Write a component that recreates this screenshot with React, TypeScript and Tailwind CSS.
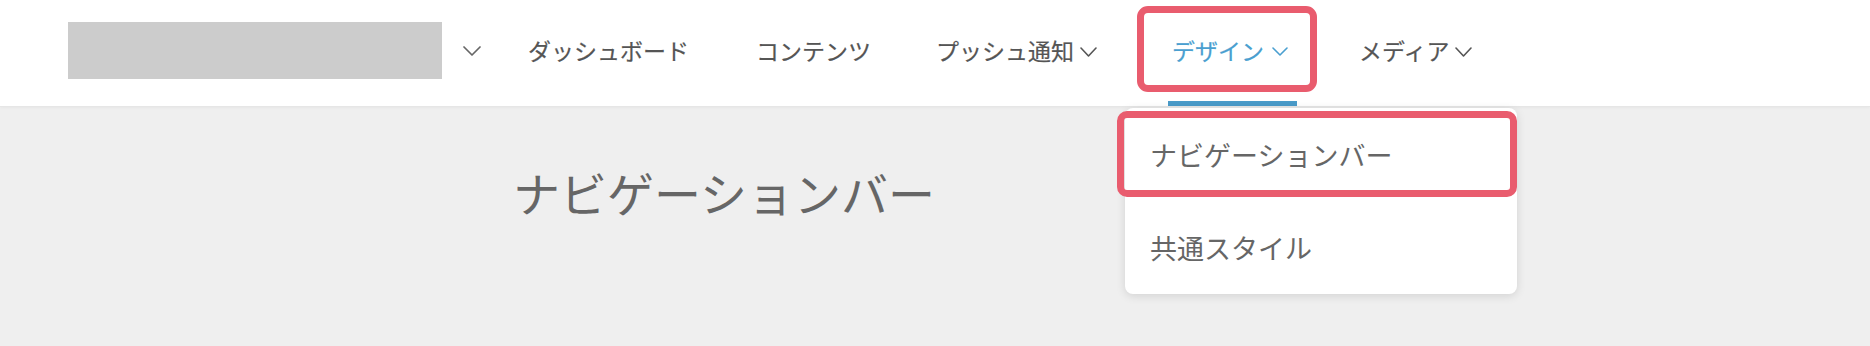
import React from "react";

const font = { fontFamily: '"Noto Sans CJK JP", "Noto Sans", sans-serif' };

function Chevron({ w = 17, h = 10, color = "currentColor", sw = 1.6 }: { w?: number; h?: number; color?: string; sw?: number }) {
  return (
    <svg width={w} height={h} viewBox={`0 0 ${w} ${h}`} fill="none">
      <polyline points={`1,1 ${w / 2},${h - 1} ${w - 1},1`} stroke={color} strokeWidth={sw} strokeLinecap="round" strokeLinejoin="round" />
    </svg>
  );
}

function NavItem({ label, chevron, ml }: { label: string; chevron?: boolean; ml: string }) {
  return (
    <div className={`flex h-full flex-col ${ml}`}>
      <div className="flex flex-1 items-center text-[23px] font-normal leading-none text-[#555555] [-webkit-text-stroke:0.2px_#555555]">
        <span>{label}</span>
        {chevron && (
          <span className="ml-[6px] mt-[2px] flex">
            <Chevron />
          </span>
        )}
      </div>
      <div className="h-[5px]" />
    </div>
  );
}

export default function App() {
  return (
    <div className="flex h-[346px] w-[1870px] flex-col overflow-hidden bg-[#efefef]" style={font}>
      <header className="relative z-10 flex h-[107px] shrink-0 items-stretch border-b border-[#e6e6e6] bg-white shadow-[0_1px_3px_rgba(0,0,0,0.04)]">
        <div className="flex items-center pb-[5px]">
          <div className="ml-[68px] h-[57px] w-[374px] bg-[#cccccc]" />
          <span className="ml-[21px] flex text-[#666666]">
            <Chevron w={18} h={10} sw={1.7} />
          </span>
        </div>
        <NavItem label="ダッシュボード" ml="ml-[47px]" />
        <NavItem label="コンテンツ" ml="ml-[67px]" />
        <NavItem label="プッシュ通知" chevron ml="ml-[65px]" />
        <div className="relative ml-[75px] flex h-full flex-col">
          <div className="flex flex-1 items-center text-[23px] font-normal leading-none text-[#4a9fd0] [-webkit-text-stroke:0.2px_#4a9fd0]">
            <span>デザイン</span>
            <span className="ml-[8px] mt-[2px] flex">
              <Chevron w={16} h={9} />
            </span>
          </div>
          <div className="-ml-[4px] -mr-[9px] h-[5px] bg-[#4a9bc9]" />
          <div className="pointer-events-none absolute left-[-35px] top-[6px] h-[86px] w-[180px] rounded-[11px] border-[7px] border-[#e95c6e]" />
          <div className="absolute left-[-47px] top-[calc(100%+2px)] w-[392px] rounded-[8px] bg-white shadow-[0_2px_10px_rgba(0,0,0,0.12)]">
            <div className="relative flex h-[93px] items-center pl-[25px] text-[27px] leading-none text-[#666666]">
              ナビゲーションバー
              <div className="pointer-events-none absolute left-[-8px] top-[3px] h-[86px] w-[400px] rounded-[10px] border-[7px] border-[#e95c6e]" />
            </div>
            <div className="flex h-[93px] items-center pl-[25px] text-[27px] leading-none text-[#666666]">共通スタイル</div>
          </div>
        </div>
        <NavItem label="メディア" chevron ml="ml-[71px]" />
      </header>
      <main className="flex-1 pl-[513px] pt-[61px]">
        <h1 className="text-[47px] font-normal leading-none text-[#666666]">ナビゲーションバー</h1>
      </main>
    </div>
  );
}
